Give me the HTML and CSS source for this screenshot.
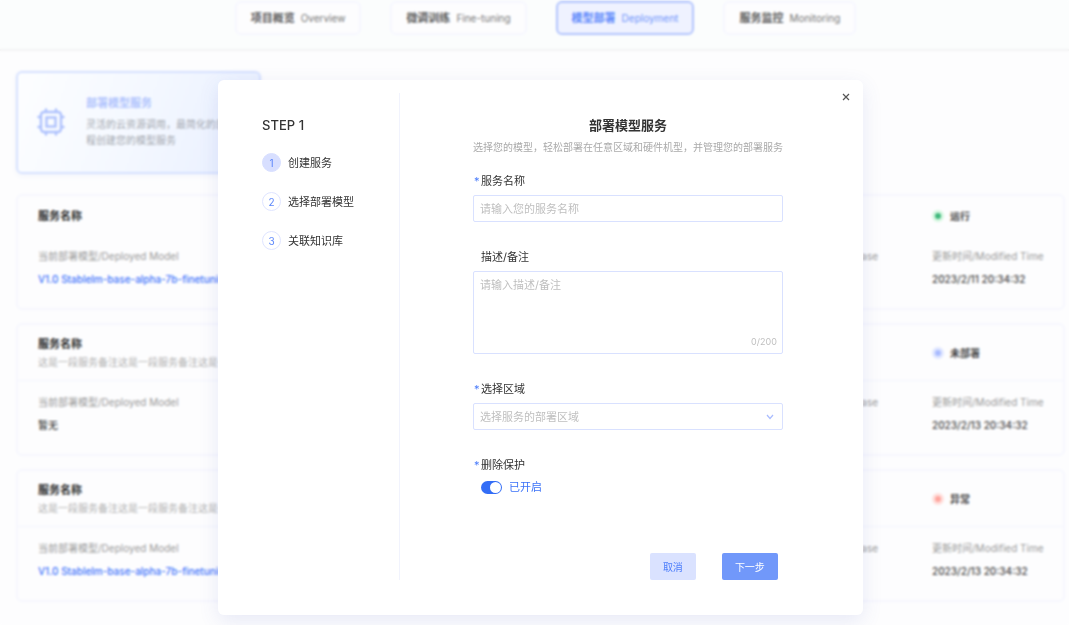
FILE: index.html
```html
<!DOCTYPE html>
<html lang="zh-CN">
<head>
<meta charset="utf-8">
<meta name="viewport" content="width=device-width, initial-scale=1">
<title>模型部署</title>
<link rel="stylesheet" href="styles.css">
</head>
<body>
<div class="page">
  <header class="topbar">
    <nav class="tabs">
      <a class="tab" href="#overview"><b>项目概览</b><span>Overview</span></a>
      <a class="tab" href="#tuning"><b>微调训练</b><span>Fine-tuning</span></a>
      <a class="tab tab-active" href="#deployment"><b>模型部署</b><span>Deployment</span></a>
      <a class="tab" href="#monitoring"><b>服务监控</b><span>Monitoring</span></a>
    </nav>
  </header>
  <main class="content">
    <section class="feature">
      <svg class="feature-icon" viewBox="0 0 28 28" fill="none" stroke="currentColor" stroke-width="2.400" stroke-linecap="round" aria-hidden="true">
        <rect x="4" y="4" width="20" height="20" rx="3"/>
        <rect x="9.500" y="9.500" width="9" height="9"/>
        <path d="M9 4V1.500M19 4V1.500M9 26.500V24M19 26.500V24M4 9H1.500M4 19H1.500M26.500 9H24M26.500 19H24"/>
      </svg>
      <div>
        <h2 class="feature-title">部署模型服务</h2>
        <p class="feature-text">灵活的云资源调用，最简化的部<br>程创建您的模型服务</p>
      </div>
    </section>
    <section class="services">
      <article class="card">
        <div class="card-head card-head-plain">
          <h3 class="card-name">服务名称</h3>
          <span class="status status-running">运行</span>
        </div>
        <dl class="card-body">
          <div><dt>当前部署模型/Deployed Model</dt><dd class="model">V1.0 Stablelm-base-alpha-7b-finetuning</dd></div>
          <div><dt>知识库/Database</dt></div>
          <div><dt>更新时间/Modified Time</dt><dd>2023/2/11 20:34:32</dd></div>
        </dl>
      </article>
      <article class="card">
        <div class="card-head">
          <div><h3 class="card-name">服务名称</h3><p class="card-note">这是一段服务备注这是一段服务备注这是一段服务备注</p></div>
          <span class="status status-idle">未部署</span>
        </div>
        <dl class="card-body">
          <div><dt>当前部署模型/Deployed Model</dt><dd>暂无</dd></div>
          <div><dt>知识库/Database</dt></div>
          <div><dt>更新时间/Modified Time</dt><dd>2023/2/13 20:34:32</dd></div>
        </dl>
      </article>
      <article class="card">
        <div class="card-head">
          <div><h3 class="card-name">服务名称</h3><p class="card-note">这是一段服务备注这是一段服务备注这是一段服务备注</p></div>
          <span class="status status-error">异常</span>
        </div>
        <dl class="card-body">
          <div><dt>当前部署模型/Deployed Model</dt><dd class="model">V1.0 Stablelm-base-alpha-7b-finetuning</dd></div>
          <div><dt>知识库/Database</dt></div>
          <div><dt>更新时间/Modified Time</dt><dd>2023/2/13 20:34:32</dd></div>
        </dl>
      </article>
    </section>
  </main>
</div>

<div class="overlay">
  <div class="modal" role="dialog" aria-modal="true" aria-labelledby="modal-title">
    <button class="close" type="button" aria-label="关闭">
      <svg viewBox="0 0 8 8" fill="none" stroke="currentColor" stroke-width="1.200" aria-hidden="true"><path d="M1 1L7 7M7 1L1 7"/></svg>
    </button>
    <aside class="steps">
      <h2 class="steps-title">STEP 1</h2>
      <ol class="step-list">
        <li class="step"><span class="step-number step-current">1</span>创建服务</li>
        <li class="step"><span class="step-number">2</span>选择部署模型</li>
        <li class="step"><span class="step-number">3</span>关联知识库</li>
      </ol>
    </aside>
    <form class="form">
      <h1 class="form-title" id="modal-title">部署模型服务</h1>
      <p class="form-subtitle">选择您的模型，轻松部署在任意区域和硬件机型，并管理您的部署服务</p>
      <div class="fields">
        <div class="field">
          <label class="label required" for="name">服务名称</label>
          <input class="control" id="name" type="text" placeholder="请输入您的服务名称">
        </div>
        <div class="field">
          <label class="label" for="note">描述/备注</label>
          <div class="note-box">
            <textarea class="control note" id="note" maxlength="200" placeholder="请输入描述/备注"></textarea>
            <span class="counter">0/200</span>
          </div>
        </div>
        <div class="field">
          <label class="label required" for="region">选择区域</label>
          <div class="select-box">
            <select class="control region" id="region"><option>选择服务的部署区域</option></select>
            <svg class="chevron" viewBox="0 0 8 6" fill="none" stroke="currentColor" stroke-width="1.200" aria-hidden="true"><path d="M1 1L4 4.500L7 1"/></svg>
          </div>
        </div>
        <div class="field">
          <label class="label required" for="protect">删除保护</label>
          <div class="switch-row">
            <input class="switch" id="protect" type="checkbox" checked>
            <span>已开启</span>
          </div>
        </div>
      </div>
      <div class="actions">
        <button class="button button-light" type="button">取消</button>
        <button class="button button-primary" type="button">下一步</button>
      </div>
    </form>
  </div>
</div>
</body>
</html>
```

FILE: styles.css
```css
*, *::before { box-sizing: border-box; }

body, h1, h2, h3, p, ol, dl, dd { margin: 0; padding: 0; }

body {
  min-height: 100vh;
  overflow: hidden;
  background: #fdfdfe;
  color: #333;
  font-family: Inter, "Noto Sans CJK SC", sans-serif;
  font-size: 11px;
  line-height: 16px;
}

button, input, select, textarea { font: inherit; }

/* Page behind the dialog */
.topbar {
  padding: 1px 0 14px 22px;
  border-bottom: 2px solid #f3f3f4;
  background: #fbfdfd;
}

.tabs { display: flex; justify-content: center; gap: 29px; }

.tab {
  display: flex;
  align-items: center;
  gap: 6px;
  padding: 7px 14px;
  border: 2px solid #f6f7ff;
  border-radius: 6px;
  background: #fdfdfe;
  color: #777;
  font-size: 10px;
  text-decoration: none;
}

.tab b { color: #5c5c5c; font-size: 11px; }
.tab-active { border-color: #b3c5fd; background: #eff2ff; color: #6f95fb; }
.tab-active b { color: #5c87fb; }

.content { padding: 20px 4px 16px 16px; }

.feature {
  display: flex;
  align-items: center;
  gap: 21px;
  width: 245px;
  height: 103px;
  padding: 0 20px 2px 19px;
  border: 2px solid #d6e1ff;
  border-radius: 6px;
  background: linear-gradient(110deg, #fdfeff 0%, #f4f8ff 50%, #e8efff 100%);
  box-shadow: 0 2px 6px #f3f5fb;
}

.feature-icon { flex: none; width: 28px; height: 28px; color: #afc2fd; }
.feature-title { margin-bottom: 5px; color: #b0c3fd; font-size: 11px; }
.feature-text { color: #a4a8b0; font-size: 10px; white-space: nowrap; }

.services { display: grid; gap: 13px; margin-top: 20px; }

.card { border: 2px solid #f6f7fe; border-radius: 6px; }

.card-head, .card-body {
  display: grid;
  grid-template-columns: 1fr auto 111px;
  column-gap: 54px;
  padding: 0 20px;
}

.card-head {
  grid-template-columns: 1fr 111px;
  align-items: center;
  height: 56px;
  border-bottom: 1px solid #f3f5fd;
}

.card-head-plain { height: 39px; border: 0; }
.card-name { color: #2a2a2a; font-size: 11px; }
.card-note { margin-top: 2px; color: #b2b2b2; font-size: 10px; }

.card-body { padding: 14px 20px 22px; font-size: 10px; line-height: 14px; white-space: nowrap; }
.card-body > div { min-width: 0; }
.card-body dt { color: #9a9a9a; }
.card-body dd { margin-top: 9px; color: #444; font-weight: 500; }
.card-body .model { color: #3f74fb; }

.status {
  display: flex;
  align-items: center;
  gap: 6px;
  color: #444;
  font-size: 10px;
  font-weight: 700;
}

.status::before {
  content: "";
  width: 12px;
  height: 12px;
  border: 3px solid var(--halo);
  border-radius: 50%;
  background: var(--dot);
}

.status-running { --dot: #3fb87c; --halo: #d5f7e0; }
.status-idle { --dot: #a9bbff; --halo: #e0e7ff; }
.status-error { --dot: #ffa59e; --halo: #ffdfdc; }

/* Dialog */
.overlay {
  position: fixed;
  inset: 0;
  display: flex;
  justify-content: center;
  padding: 80px 0 10px 12px;
  backdrop-filter: blur(1px);
}

.modal {
  position: relative;
  display: grid;
  grid-template-columns: 182px 1fr;
  width: 61%;
  min-width: 600px;
  padding: 13px 0 35px;
  border-radius: 6px;
  background: #fff;
  box-shadow: 0 6px 20px rgba(70, 90, 190, 0.12);
}

.close {
  position: absolute;
  top: 9px;
  right: 9px;
  display: grid;
  place-items: center;
  width: 16px;
  height: 16px;
  padding: 0;
  border: 0;
  background: none;
  color: #555;
}

.close svg { width: 8px; height: 8px; }

.steps { padding: 23px 0 0 44px; border-right: 1px solid #f1f3fd; }
.steps-title { font-size: 13px; font-weight: 500; line-height: 18px; }
.step-list { display: grid; gap: 20px; margin-top: 19px; list-style: none; }
.step { display: flex; align-items: center; gap: 7px; }

.step-number {
  display: grid;
  place-items: center;
  width: 19px;
  height: 19px;
  border: 1px solid #dfe5ff;
  border-radius: 50%;
  color: #5c87fb;
  font-size: 10px;
}

.step-current { border-color: #d8dfff; background: #d8dfff; }

.form { display: flex; flex-direction: column; padding: 23px 80px 0 73px; }
.form-title { font-size: 13px; font-weight: 700; line-height: 18px; text-align: center; }

.form-subtitle {
  margin: 6px -8px 0;
  color: #aaa;
  font-size: 10px;
  line-height: 14px;
  text-align: center;
  white-space: nowrap;
}

.fields { display: grid; gap: 27px; margin-top: 19px; }
.field { display: grid; gap: 6px; }
.label { position: relative; padding-left: 8px; }
.required::before { content: "*"; position: absolute; left: 1px; color: #4c7dfb; }

.control {
  display: block;
  width: 100%;
  height: 27px;
  padding: 0 6px;
  border: 1px solid #d9e1ff;
  border-radius: 2px;
  outline: 0;
  background: #fff;
  color: #333;
}

.control::placeholder { color: #bfbfbf; opacity: 1; }
.note-box, .select-box { position: relative; }
.note { height: 83px; padding: 5px 6px; resize: none; }
.counter { position: absolute; right: 6px; bottom: 4px; color: #bfbfbf; font-size: 9px; }
.region { appearance: none; color: #bfbfbf; }
.chevron { position: absolute; top: 11px; right: 9px; width: 8px; height: 6px; color: #a9bcff; pointer-events: none; }

.switch-row { display: flex; align-items: center; gap: 7px; padding-left: 8px; color: #3b72f8; }

.switch {
  display: flex;
  justify-content: flex-end;
  width: 21px;
  height: 13px;
  margin: 0;
  padding: 1px;
  border-radius: 7px;
  appearance: none;
  background: #336df6;
}

.switch::before { content: ""; width: 11px; height: 11px; border-radius: 50%; background: #fff; }
.switch:not(:checked) { justify-content: flex-start; background: #c5c9d3; }

.actions { display: flex; justify-content: flex-end; gap: 26px; margin-top: auto; padding-right: 5px; }
.button { height: 27px; padding: 0 13px; border: 0; border-radius: 2px; font-size: 10px; }
.button-light { background: #dae2ff; color: #4c7dfb; }
.button-primary { background: #7198fa; color: #fff; }
```
